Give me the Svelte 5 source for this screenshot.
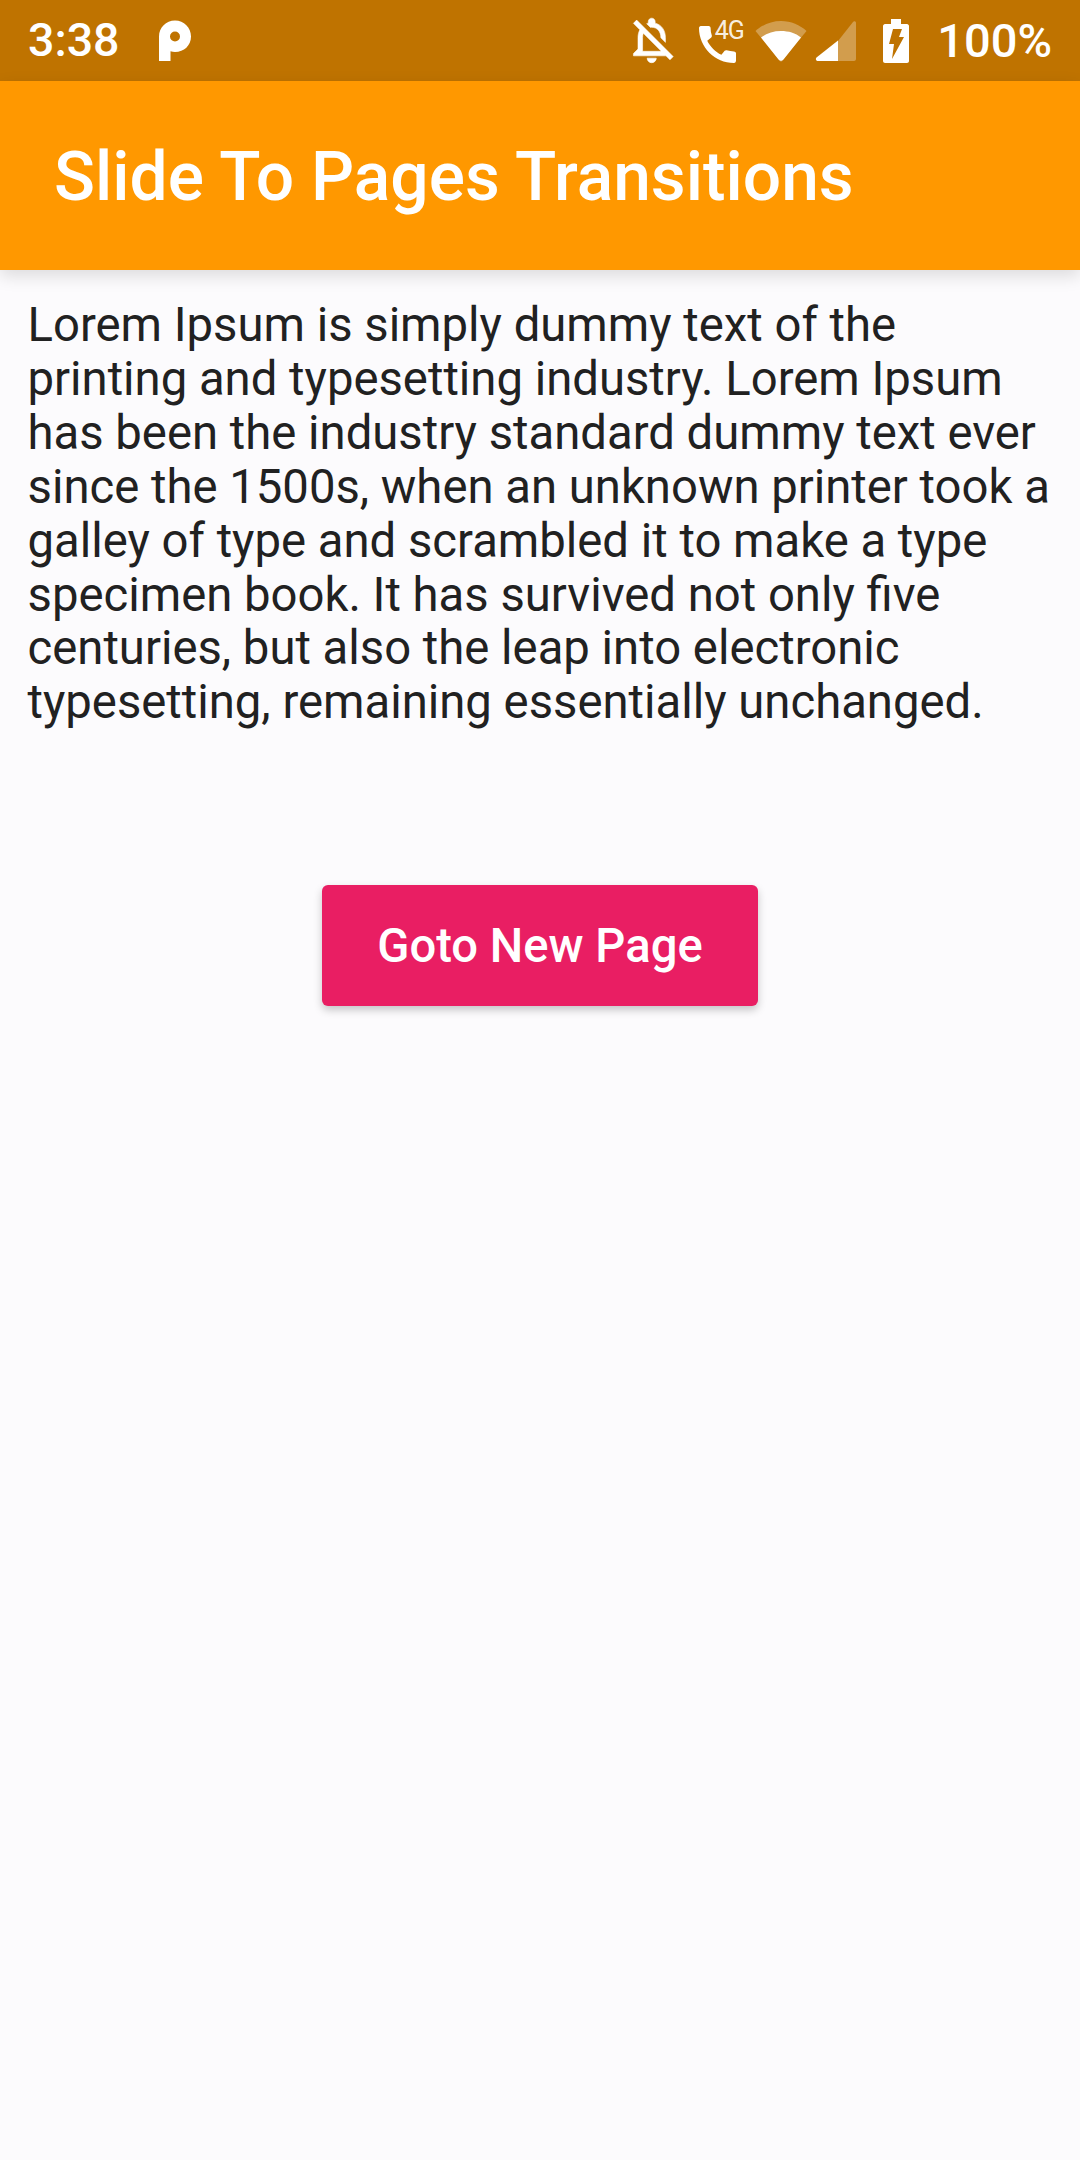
<script>
  const text = `Lorem Ipsum is simply dummy text of the
printing and typesetting industry. Lorem Ipsum
has been the industry standard dummy text ever
since the 1500s, when an unknown printer took a
galley of type and scrambled it to make a type
specimen book. It has survived not only five
centuries, but also the leap into electronic
typesetting, remaining essentially unchanged.`;
</script>

<div class="screen">
  <div class="status">
    <div class="left">
      <span class="time">3:38</span>
      <svg class="plogo" width="34" height="44" viewBox="0 0 34 44">
        <path fill-rule="evenodd" fill="#fff" d="M1 42V17.5C1 8.5 8 1.5 17 1.5S33 8.5 33 17.5 26 33 17 33c-1.500 0-3-.2-4.500-.7V42ZM17 12.500a5 5 0 1 0 0 10a5 5 0 0 0 0-10Z"/>
      </svg>
    </div>
    <div class="right">
      <svg class="bell" width="46" height="48" viewBox="3 2 20 21">
        <path fill="#fff" stroke="#fff" stroke-width=".25" d="M12 22c1.100 0 2-.9 2-2h-4c0 1.100.9 2 2 2zm0-15.500c2.490 0 4 2.020 4 4.500v.1l2 2V11c0-3.070-1.630-5.640-4.500-6.320V4c0-.83-.67-1.500-1.500-1.500s-1.500.67-1.500 1.500v.68c-.24.06-.47.15-.69.23l1.640 1.640c.18-.02.36-.05.55-.05zM5.410 3.350L4 4.760l2.810 2.810C6.290 8.570 6 9.740 6 11v5l-2 2v1h14.240l1.740 1.740 1.410-1.410L5.410 3.350zM16 17H8v-6c0-.68.12-1.320.34-1.900L16 16.760V17z"/>
      </svg>
      <div class="call">
        <svg width="37" height="37" viewBox="3 3 18 18">
          <path fill="#fff" d="M20.010 15.380c-1.230 0-2.420-.2-3.530-.56-.35-.12-.74-.03-1.010.24l-1.570 1.970c-2.830-1.350-5.480-3.900-6.890-6.830l1.950-1.660c.27-.28.35-.67.24-1.020-.37-1.110-.56-2.300-.56-3.530 0-.54-.45-.99-.99-.99H4.190C3.650 3 3 3.240 3 3.990 3 13.280 10.730 21 20.010 21c.71 0 .99-.63.99-1.180v-3.450c0-.54-.45-.99-.99-.99z"/>
        </svg>
        <span class="fourg">4G</span>
      </div>
      <svg class="wifi" width="52" height="42" viewBox="0 0 52 42">
        <path fill="#fff" fill-opacity=".3" d="M0.500 11C7 5 16 1 26 1s19 4 25.500 10L26 42Z"/>
        <path fill="#fff" d="M6 17.500C11.500 13 18.500 11 26 11s14.500 2 20 6.500L28.500 39.500c-1.300 1.700-3.700 1.700-5 0Z"/>
      </svg>
      <svg class="signal" width="42" height="42" viewBox="0 0 42 42">
        <path fill="#fff" fill-opacity=".3" d="M23 21 38 2c1-1.200 3-.6 3 1v36c0 1-1 2-2 2H23Z"/>
        <path fill="#fff" d="M23 20.500V41H3c-2 0-2.800-2-1.500-3.500Z"/>
      </svg>
      <svg class="battery" width="26" height="44" viewBox="0 0 26 44">
        <path fill="#fff" fill-rule="evenodd" d="M8 0h10v5h6c1 0 2 1 2 2v35c0 1-1 2-2 2H2c-1 0-2-1-2-2V7c0-1 1-2 2-2h6ZM10 10h9l-3 8h5L9 40l2-15H6Z"/>
      </svg>
      <span class="pct">100%</span>
    </div>
  </div>
  <header class="appbar"><h1>Slide To Pages Transitions</h1></header>
  <main>
    <p>{text}</p>
    <div class="action"><button type="button">Goto New Page</button></div>
  </main>
</div>

<style>
  :global(body) {
    margin: 0;
    background: #fcfbfd;
  }
  .screen {
    display: flex;
    flex-direction: column;
    width: 1080px;
    height: 2160px;
    overflow: hidden;
    background: #fcfbfd;
    font-family: Roboto, sans-serif;
  }
  .status {
    display: flex;
    justify-content: space-between;
    align-items: center;
    height: 81px;
    padding: 0 28px;
    box-sizing: border-box;
    background: #bf7300;
    color: #fff;
    flex: none;
  }
  .left,
  .right {
    display: flex;
    align-items: center;
  }
  .time,
  .pct {
    font-size: 46.500px;
    font-weight: 500;
    line-height: 81px;
    white-space: nowrap;
  }
  .pct {
    font-size: 47px;
  }
  .plogo {
    margin-left: 38px;
  }
  .bell {
    margin-right: 22px;
  }
  .call {
    position: relative;
    width: 44px;
    height: 44px;
    display: flex;
    align-items: flex-end;
    margin-right: 12px;
  }
  .fourg {
    position: absolute;
    left: 16px;
    top: -1px;
    font-size: 25px;
    line-height: 26px;
    letter-spacing: -1px;
    color: rgba(255, 255, 255, 0.9);
  }
  .wifi {
    margin-right: 8px;
  }
  .signal {
    margin-right: 26px;
  }
  .battery {
    margin-right: 28.500px;
  }
  .appbar {
    flex: none;
    height: 189px;
    box-sizing: border-box;
    padding: 4px 0 0 54px;
    display: flex;
    align-items: center;
    background: #ff9800;
    box-shadow: 0 6px 16px rgba(0, 0, 0, 0.13);
    position: relative;
  }
  h1 {
    margin: 0;
    font-size: 67.700px;
    font-weight: 500;
    color: #fff;
    line-height: 1;
    white-space: nowrap;
  }
  main {
    flex: 1;
    padding: 0 27.500px;
  }
  p {
    margin: 0;
    padding-top: 29px;
    font-size: 47.250px;
    line-height: 53.900px;
    color: #212121;
    white-space: pre-line;
  }
  .action {
    display: flex;
    justify-content: center;
    margin-top: 155px;
  }
  button {
    width: 436px;
    height: 121px;
    border: 0;
    border-radius: 6px;
    background: #e91e63;
    color: #fff;
    font-family: Roboto, sans-serif;
    font-size: 47.200px;
    font-weight: 500;
    box-shadow: 0 4px 8px rgba(0, 0, 0, 0.22);
  }
</style>
